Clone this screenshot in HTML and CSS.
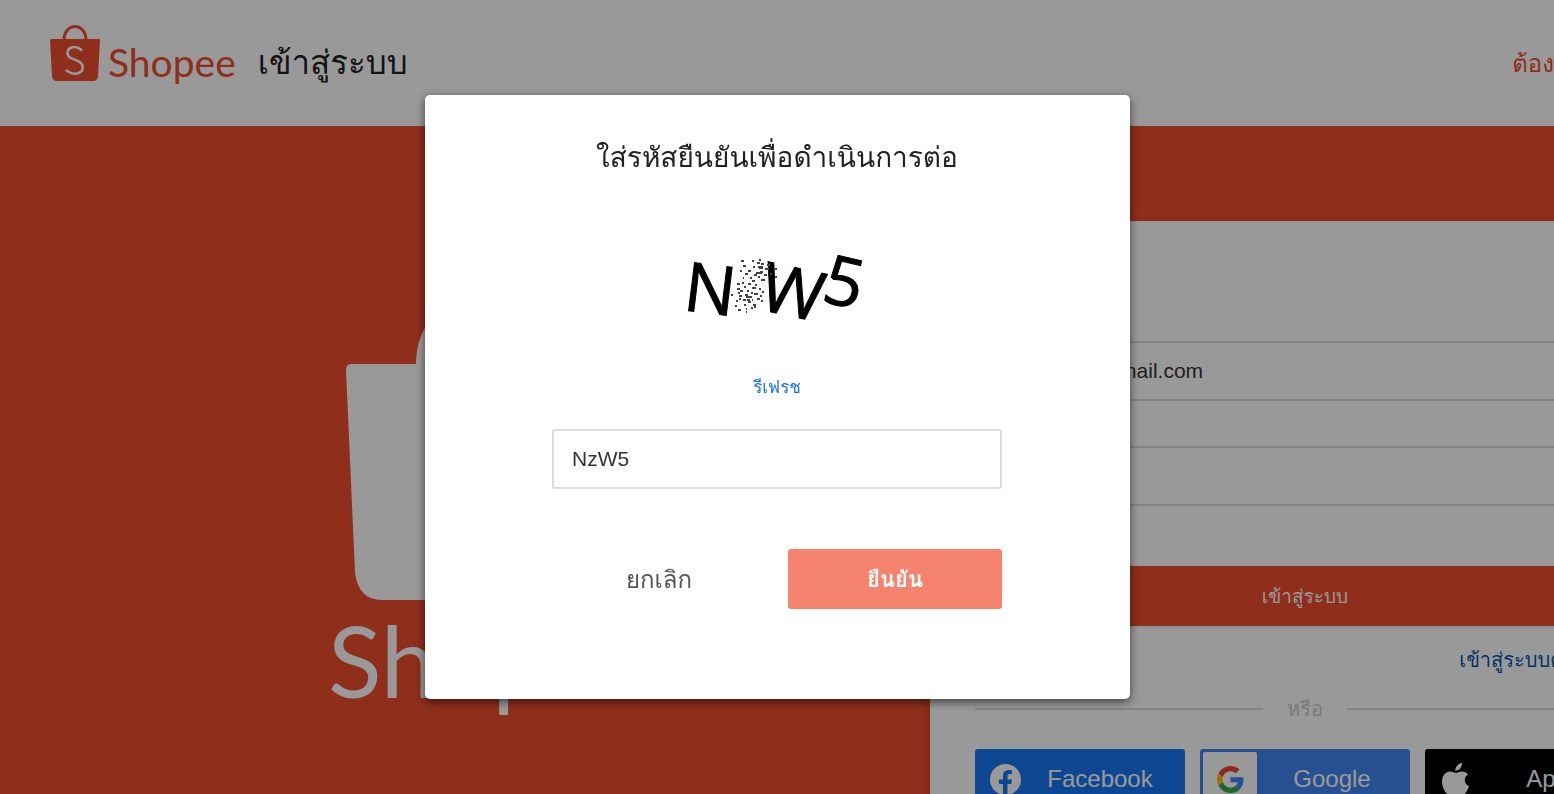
FILE: index.html
```html
<!DOCTYPE html>
<html lang="th">
<head>
<meta charset="utf-8">
<title>Shopee</title>
<link rel="stylesheet" href="styles.css">
</head>
<body>
<div class="page">
  <header class="header">
    <a class="logo" href="#" aria-label="Shopee">
      <svg class="logo-bag" viewBox="0 0 50 57" aria-hidden="true">
        <path d="M14 15C14 7 19 1.500 25 1.500S36 7 36 15" fill="none" stroke="#ee4d2d" stroke-width="3"/>
        <path d="M1 14H49Q50 14 50 15L48 51Q47.500 56 43 56H7Q2.500 56 2 51L0 15Q0 14 1 14Z" fill="#ee4d2d"/>
        <path d="M31.500 25C28 22 24.500 21.500 21.500 22.500C17 24 16 30 20 32.500C24 35 31 35.500 32.500 40.500C34 46 29 49 24.500 48.700C21 48.500 18.500 47 16.500 45.500" fill="none" stroke="#fff" stroke-width="2.500" stroke-linecap="round"/>
      </svg>
      <span class="logo-word">Shopee</span>
    </a>
    <h1 class="page-title">เข้าสู่ระบบ</h1>
    <a class="help" href="#">ต้องการความช่วยเหลือ?</a>
  </header>

  <main class="main">
    <div class="brand">
      <svg class="brand-bag" viewBox="0 0 266 330" aria-hidden="true">
        <path d="M76 96V94A57 64 0 0 1 190 94V96" fill="none" stroke="#fff" stroke-width="12"/>
        <path d="M5 94H261Q266 94 266 100L257 302Q254 330 230 330H36Q12 330 9 302L0 100Q0 94 5 94Z" fill="#fff"/>
      </svg>
      <div class="brand-word">Shopee</div>
    </div>

    <form class="card">
      <h2 class="card-title">เข้าสู่ระบบ</h2>
      <input class="field" type="text" aria-label="อีเมล" value="example8@gmail.com">
      <input class="field" type="password" aria-label="รหัสผ่าน">
      <button class="login" type="button">เข้าสู่ระบบ</button>
      <a class="sms" href="#">เข้าสู่ระบบด้วย SMS</a>
      <div class="divider"><span>หรือ</span></div>
      <div class="social">
        <button class="social-btn facebook" type="button">
          <svg width="31" height="31" viewBox="0 0 31 31" aria-hidden="true"><circle cx="15.500" cy="15.500" r="15.500" fill="#fff"/><path d="M13 31V20H9V15.500H13V12C13 8 15.400 6 19 6C20.500 6 22 6.300 22 6.300V10H20C18 10 17.500 11.300 17.500 12.500V15.500H22L21.300 20H17.500V31Z" fill="#1877f2"/></svg>
          <span>Facebook</span>
        </button>
        <button class="social-btn google" type="button">
          <span class="google-box"><svg width="27" height="27" viewBox="0 0 48 48" aria-hidden="true"><path fill="#ea4335" d="M24 9.500c3.540 0 6.710 1.220 9.210 3.600l6.850-6.850C35.900 2.380 30.470 0 24 0 14.620 0 6.510 5.380 2.560 13.220l7.980 6.190C12.430 13.720 17.740 9.500 24 9.500z"/><path fill="#4285f4" d="M46.980 24.550c0-1.570-.15-3.090-.38-4.550H24v9.020h12.940c-.58 2.960-2.260 5.480-4.780 7.180l7.730 6c4.510-4.180 7.090-10.360 7.090-17.650z"/><path fill="#fbbc05" d="M10.530 28.590c-.48-1.450-.76-2.990-.76-4.590s.27-3.140.76-4.590l-7.980-6.190C.92 16.460 0 20.120 0 24c0 3.880.92 7.540 2.560 10.780l7.970-6.190z"/><path fill="#34a853" d="M24 48c6.480 0 11.930-2.130 15.890-5.810l-7.730-6c-2.150 1.450-4.920 2.300-8.160 2.300-6.260 0-11.570-4.220-13.470-9.910l-7.980 6.190C6.510 42.620 14.620 48 24 48z"/></svg></span>
          <span>Google</span>
        </button>
        <button class="social-btn apple" type="button">
          <svg width="27" height="33" viewBox="0 0 27 33" aria-hidden="true"><path fill="#fff" d="M20 0C20.300 4 17.500 7.800 13.300 7.800C13 4 16.200.5 20 0ZM13.900 10C15.300 10 17.400 8.400 20.200 8.400C22.500 8.400 24.700 9.600 26 11.500C21.200 14.400 21.900 21.200 27 23.200C25.700 27 22.800 32.500 19.700 32.500C17.600 32.500 16.700 31.200 14.200 31.200C11.600 31.200 10.600 32.500 8.700 32.500C4.500 32.500 0 25 0 18.500C0 12 4 8.500 8 8.500C10.500 8.500 12.600 10 13.900 10Z"/></svg>
          <span>Apple</span>
        </button>
      </div>
    </form>
  </main>
</div>

<div class="overlay">
  <form class="modal" role="dialog" aria-labelledby="dialog-title">
    <h2 class="modal-title" id="dialog-title">ใส่รหัสยืนยันเพื่อดำเนินการต่อ</h2>
    <svg class="code-image" viewBox="2 0 230 110">
      <g class="code-letters">
        <text x="22" y="80" transform="rotate(7 22 80)">N</text>
        <text x="97" y="79" transform="rotate(12 97 79)">W</text>
        <text x="160" y="71" transform="rotate(13 160 71)">5</text>
      </g>
      <path class="code-dots" d="M81 31h3M92 31h2M99 30h2M101 34h3M107 35h3M83 36h3M93 37h2M98 37h5M105 39h4M80 41h2M88 41h3M100 42h3M94 45h3M85 44h3M98 47h2M101 50h4M92 51h3M82 53h2M88 54h3M95 55h2M77 54h3M84 57h2M92 58h4M99 59h2M77 59h3M80 61h3M87 61h2M94 64h4M102 62h2M79 66h3M85 65h3M90 67h2M97 69h3M71 65h2M76 71h2M83 70h3M88 72h3M101 71h2M79 69h2M93 75h3M84 75h2M75 76h2M91 78h2M78 80h3M86 82h1M94 77h2M114 39h3M115 47h2M110 44h2M86 67h5M87 70h3M96 43h6M99 38h4M91 63h2M97 33h3M100 66h2M90 48h2M104 45h3M92 70h1M83 48h1M78 63h2M86 79h1"/>
    </svg>
    <button class="refresh" type="button">รีเฟรช</button>
    <input class="field code-field" type="text" aria-labelledby="dialog-title" value="NzW5">
    <div class="actions">
      <button class="action cancel" type="button">ยกเลิก</button>
      <button class="action confirm" type="button">ยืนยัน</button>
    </div>
  </form>
</div>
</body>
</html>
```

FILE: styles.css
```css
* { box-sizing: border-box; }

html, body { height: 100%; overflow: hidden; }

body {
  margin: 0;
  background: #fff;
  color: #222;
  font-family: "Liberation Sans", Loma, "Noto Sans Thai Looped", "Noto Sans Thai", "Noto Sans", sans-serif;
  font-size: 21px;
}

h1, h2 { margin: 0; font-weight: 400; }
a { text-decoration: none; color: inherit; }
button, input { font: inherit; }
button { border: 0; cursor: pointer; }

/* Page behind the dialog */
.page { min-width: 1800px; }

.header {
  display: flex;
  align-items: center;
  height: 126px;
  padding: 0 36px 0 50px;
}

.logo {
  display: flex;
  align-items: center;
  gap: 8px;
  padding-bottom: 20px;
  color: #ee4d2d;
}
.logo-bag { width: 50px; height: 57px; }
.logo-word { padding-top: 18px; font: 39px/48px Lato, sans-serif; }

.page-title { margin-left: 22px; font-size: 33px; line-height: 54px; }
.help { margin-left: auto; color: #ee4d2d; font-size: 24px; }

.main {
  display: flex;
  align-items: flex-start;
  min-height: 900px;
  padding-top: 95px;
  background: #ee4d2d;
}

.brand {
  flex: 0 0 930px;
  display: flex;
  flex-direction: column;
  align-items: flex-start;
  padding: 49px 0 0 328px;
  color: #fff;
}
.brand-bag { width: 266px; height: 330px; margin-left: 18px; }
.brand-word { font: 99px/120px Lato, sans-serif; }

.card {
  flex: 0 0 750px;
  display: flex;
  flex-direction: column;
  padding: 0 45px 45px;
  border-radius: 6px;
  background: #fff;
  box-shadow: 0 4px 14px rgba(0, 0, 0, .14);
}
.card-title { height: 120px; font-size: 28px; line-height: 120px; }

.field {
  width: 100%;
  height: 60px;
  padding: 0 18px;
  border: 2px solid #dbdbdb;
  border-radius: 3px;
  background: #fff;
  color: #333;
  outline: 0;
}
.card .field { margin-bottom: 45px; }

.login {
  height: 60px;
  margin-top: 15px;
  border-radius: 3px;
  background: #ee4d2d;
  color: #fff;
  font-size: 19px;
  box-shadow: 0 1px 2px rgba(0, 0, 0, .1);
}
.sms { align-self: flex-end; margin-top: 18px; color: #05a; font-size: 20px; line-height: 33px; }

.divider {
  display: flex;
  align-items: center;
  gap: 24px;
  height: 33px;
  margin: 15px 0 24px;
  color: #ccc;
  font-size: 20px;
}
.divider::before, .divider::after { content: ""; flex: 1; height: 2px; background: #dbdbdb; }

.social { display: grid; grid-template-columns: repeat(3, 1fr); gap: 15px; }
.social-btn {
  display: flex;
  align-items: center;
  height: 60px;
  padding: 0;
  border-radius: 3px;
  color: #fff;
  font-size: 24px;
}
.social-btn > span:last-child { flex: 1; text-align: center; }
.facebook { padding: 0 6px 0 15px; background: #1877f2; }
.google { padding: 3px; background: #4285f4; }
.google-box {
  display: flex;
  align-items: center;
  justify-content: center;
  width: 54px;
  height: 54px;
  border-radius: 2px;
  background: #fff;
}
.apple { gap: 10px; padding: 0 0 0 17px; background: #000; }

/* Dialog */
.overlay {
  position: fixed;
  inset: 0;
  display: flex;
  align-items: center;
  justify-content: center;
  background: rgba(0, 0, 0, .4);
}

.modal {
  display: flex;
  flex-direction: column;
  align-items: center;
  width: 705px;
  max-width: 100%;
  padding: 42px 15px 90px;
  border-radius: 5px;
  background: #fff;
  box-shadow: 0 3px 10px rgba(0, 0, 0, .6);
}
.modal-title { font-size: 28px; line-height: 42px; }
.code-image { width: 230px; height: 110px; margin-top: 51px; }
.code-letters { font: 68px "Open Sans", sans-serif; stroke: #000; stroke-width: 1; }
.code-dots { fill: none; stroke: #444; stroke-width: 2; }
.refresh { margin-top: 30px; padding: 0; background: none; color: #1a73e8; font-size: 17px; line-height: 36px; }
.code-field { max-width: 450px; margin-top: 23px; }

.actions {
  display: grid;
  grid-template-columns: 1fr 1fr;
  gap: 22px;
  width: 100%;
  max-width: 450px;
  margin-top: 60px;
}
.action { height: 60px; border-radius: 3px; font-size: 22px; }
.cancel { background: none; color: #555; font-size: 24px; }
.confirm { background: #f5836d; color: #fff; font-weight: 700; }
```
